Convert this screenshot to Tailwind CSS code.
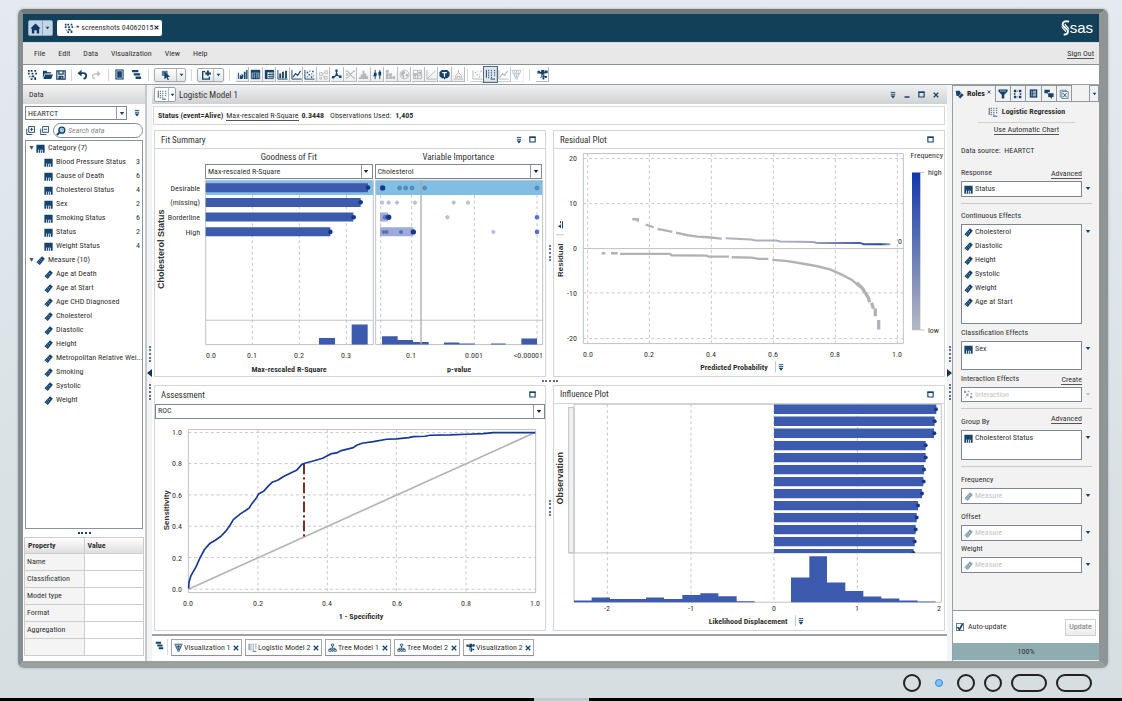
<!DOCTYPE html>
<html lang="en">
<head>
<meta charset="utf-8">
<title>SAS Visual Analytics - Logistic Model 1</title>
<script src="https://cdn.jsdelivr.net/npm/@tailwindcss/browser@4"></script>
</head>
<body class="flex h-screen flex-col overflow-hidden bg-linear-to-b from-[#e4eaf0] to-[#d6dee1] font-['Roboto_Condensed','Open_Sans_Condensed','Liberation_Sans',sans-serif] text-[8px] leading-[12px] text-[#333]">

<svg class="hidden" aria-hidden="true">
  <symbol id="cat" viewBox="0 0 12 12"><path fill="#15436b" d="M.5 1h11v10.500H9V7.500H8V11.500H6.500V7.500H5.500V11.500H4V7.500H3V11.500H.5z"/><path stroke="#9ab6cf" stroke-width=".7" d="M3.500 6.500V10M7.200 6.500V10"/></symbol>
  <symbol id="mea" viewBox="0 0 12 12"><path fill="#15436b" d="M8 .2 11.800 3.500 5 12 .5 8.300z"/><path stroke="#d5e3ef" stroke-width="1" d="m6.500 4 1.300 1.200M4.800 6l1.300 1.200M3.100 8l1.300 1.200"/></symbol>
  <symbol id="caret" viewBox="0 0 8 6"><path fill="currentColor" d="M1 1h6L4 5z"/></symbol>
  <symbol id="drop" viewBox="0 0 8 10"><path stroke="currentColor" stroke-width="1.200" d="M1 1.500h6M1 4h6"/><path fill="currentColor" d="M.8 5.600h6.400L4 9.500z"/></symbol>
  <symbol id="x" viewBox="0 0 8 8"><path stroke="currentColor" stroke-width="1.700" d="m1 1 6 6M7 1 1 7"/></symbol>
  <symbol id="max" viewBox="0 0 8 8"><path fill="none" stroke="#15436b" stroke-width="1.300" d="M1 1.200h6v5.600H1z"/><path stroke="#15436b" stroke-width="1.600" d="M.5 1.500h7"/></symbol>
  <symbol id="explore" viewBox="0 0 12 12"><path fill="#15436b" d="M1 1h2v2H1zM4 1h2v2H4zM8 1h2v2H8zM1 4h2v2H1zM5 4h2v2H5zM9 4h2v2H9zM2 8h2v1H2zM5 7h3v2H5zM4 10h2v2H4zM8 9h2v3H8z"/></symbol>
  <symbol id="stack" viewBox="0 0 12 12"><path fill="#15436b" d="M1 1h7v2.600H1zM3 4.600h7v2.600H3zM5 8.200h6V11H5z"/></symbol>
  <symbol id="logit" viewBox="0 0 12 12"><path stroke="#15436b" stroke-width="1" stroke-dasharray="1.500 1" d="M4 1v10M7 1v10M10.500 1v7"/><path fill="none" stroke="#15436b" d="M1.500 1v8.500M6 11h5"/></symbol>
  <symbol id="tree" viewBox="0 0 12 12"><path fill="none" stroke="#15436b" stroke-width="1" d="M4.500 1.500h3v2.500h-3zM6 4v3M2.500 9V7h7v2M1 8.500h3V11H1zM8 8.500h3V11H8zM5 11h2V8.500H5z"/></symbol>
  <symbol id="funnelchart" viewBox="0 0 12 12"><path fill="none" stroke="#15436b" stroke-width="1" d="M1 1.500h10L9.500 5h-7zM2.500 5 4.500 8.500h3L9.500 5M5 8.500V11h2V8.500M4 1.500v7M8 1.500v7M6 2v7"/></symbol>
  <symbol id="net" viewBox="0 0 12 12"><path stroke="#15436b" stroke-width="1" d="M2 3.500 6 5.500 10 3M6 5.500 4 10M6 5.500 9 9"/><path fill="#15436b" d="M.5 2h3v3h-3zM4.500 1H8v5H4.500zM8.600 1.600h3v3h-3zM6 7h2v4.500H6zM8.500 7.500H11v2H8.500z"/></symbol>
  <symbol id="bar" viewBox="0 0 12 12"><path fill="none" stroke="currentColor" d="M1 1v10h10.500"/><path fill="currentColor" d="M2.500 5h2v5h-2zM5.500 3h2v7h-2zM8.800 2h2v8h-2z"/></symbol>
  <symbol id="autochart" viewBox="0 0 12 12"><path fill="currentColor" d="M1 4h1v7H1zM3 6l2 2V5l2 2-1 4H3zM7.500 3h1.800v8H7.500zM10 1h1.500v10H10z"/></symbol>
  <symbol id="table" viewBox="0 0 12 12"><path fill="currentColor" d="M1 1h10v3H1z"/><path fill="none" stroke="currentColor" d="M1.500 1.500h9v9h-9zM4 4v7M6 4v7M8 4v7"/><path stroke="currentColor" stroke-width=".6" d="M5 4v7M7 4v7M9.300 4v7M2.800 4v7"/></symbol>
  <symbol id="cross" viewBox="0 0 12 12"><path fill="currentColor" d="M1 1h10v2.500H1zM1 1h2.800v10H1z"/><path fill="none" stroke="currentColor" stroke-width=".8" d="M1.500 1.500h9v9h-9zM4 6h7M4 8.300h7M6.500 3v8M8.800 3v8"/></symbol>
  <symbol id="line" viewBox="0 0 12 12"><path fill="none" stroke="currentColor" d="M1 1v10h10.500"/><path fill="none" stroke="currentColor" stroke-width="1.200" d="m2 9 3-4 2.200 2L10.500 2"/></symbol>
  <symbol id="scatter" viewBox="0 0 12 12"><path fill="none" stroke="currentColor" d="M1 1v10h10.500"/><path fill="currentColor" d="M3 3h1.500v1.500H3zM6 2h1v1H6zM9 2h1.500v1.500H9zM5 5.500h1.500V7H5zM8 5h1v1H8zM3 8h1v1H3zM7.500 8H9v1.500H7.500zM10 7h1v1h-1z"/></symbol>
  <symbol id="bubble" viewBox="0 0 12 12"><path fill="none" stroke="currentColor" stroke-width=".9" d="M1.500 4h3v3h-3zM7.500 2h3v3h-3zM7 8h3v3H7zM2 9h2v2H2zM4.500 5.500l3-2M5 7l2 1.500"/></symbol>
  <symbol id="hub" viewBox="0 0 12 12"><path stroke="currentColor" stroke-width="1.300" d="M6 6.500V2M6 6.500 2 10M6 6.500l4.500 2"/><path fill="currentColor" d="M4.800.5h2.400v2.500H4.800zM1 7.500h2.700v2.700H1zM8.800 7h2.700v2.700H8.800zM5 5h2.400v2.400H5z"/></symbol>
  <symbol id="sankey" viewBox="0 0 12 12"><path fill="none" stroke="currentColor" stroke-width="1.200" d="M1 2c4 0 6 8 10 8M1 10c4 0 6-8 10-8M1 5c3 0 3 2 0 2"/></symbol>
  <symbol id="hist" viewBox="0 0 12 12"><path fill="currentColor" d="M1 11V9h2V6h2V2h2v3h2v3h2v3z"/></symbol>
  <symbol id="box" viewBox="0 0 12 12"><path stroke="currentColor" d="M3.500 1v10M8.500 1v10"/><path fill="currentColor" d="M2 4h3v4H2zM7 3h3v4H7zM1 7h1.500v1H1z"/></symbol>
  <symbol id="heat" viewBox="0 0 12 12"><path fill="currentColor" d="M1 1h3v3H1zM4.500 4.500h3v3h-3zM1 4.500h3v3H1zM1 8h3v3H1zM4.500 8h3v3h-3zM8 8h3v3H8z"/></symbol>
  <symbol id="globe" viewBox="0 0 12 12"><circle cx="6" cy="6" r="4.800" fill="none" stroke="currentColor"/><path fill="currentColor" d="M3 3l3-1 1 2-2 2 1 3-1 1-3-4zM8 5l2 1-1 3-2-2z"/></symbol>
  <symbol id="tile" viewBox="0 0 12 12"><path fill="none" stroke="currentColor" d="M1.500 1.500h9v9h-9zM6 2v9M2 5h4M6 7.500h5M3.500 5v5.500"/><path fill="currentColor" d="M2 5h3v3H2zM7 3h3v3H7z"/></symbol>
  <symbol id="slope" viewBox="0 0 12 12"><path fill="none" stroke="currentColor" d="M1 1v10h10.500M2 10l8.500-8"/></symbol>
  <symbol id="word" viewBox="0 0 12 12"><path fill="currentColor" d="M3 1h6l2.500 2.500v4L9 10H7l-1 1.500L5 10H3L.5 7.500v-4z"/><path stroke="#fff" stroke-width="1.300" d="M3.500 4h5M6 4v4.500"/></symbol>
  <symbol id="cone" viewBox="0 0 12 12"><path fill="none" stroke="currentColor" d="M1 11h10M6 1v3M6 4 3 7v3M6 4l3 3v3M4.500 10V8h3v2"/></symbol>
  <symbol id="magnet" viewBox="0 0 12 12"><path fill="currentColor" d="M.5.500h11V3L7.500 7v4.500h-3V7L.5 3z"/><path stroke="#dfe8f0" stroke-width=".8" d="M2.500 2.500h7"/></symbol>
  <symbol id="dots" viewBox="0 0 12 12"><path fill="currentColor" d="M1 1h3v3H1zM1 5h2v2H1zM1 8h3v3H1zM7 1h3v3H7zM8 5h2v2H8zM7 8h3v3H7zM5 2h1v1H5zM5 9h1v1H5z"/></symbol>
  <symbol id="form" viewBox="0 0 12 12"><path fill="#15436b" d="M1 .5h10v11H1z"/><path stroke="#fff" d="M3 3h1M5 3h4.500M3 5h1M5 5h4.500M3 7h1M5 7h4.500M3 9h1M5 9h4.500"/></symbol>
  <symbol id="chat" viewBox="0 0 12 12"><path fill="#15436b" d="M.5 1h6.500v3H4.500v2L3 5H.5zM5 5h6.500v4.500H9.500V12L7 9.500H5z"/></symbol>
  <symbol id="pages" viewBox="0 0 12 12"><path fill="none" stroke="#5a7894" d="M1.500 1.500h7v8h-7z"/><path fill="#eef3f7" stroke="#5a7894" d="M3.500 3h7.500v8.500H3.500z"/><path stroke="#15436b" d="m5 5 4 5M9 5 5 10"/></symbol>
</svg>

<!-- Monitor frame -->
<div class="mt-[9px] mr-[14px] ml-[18px] flex min-h-0 flex-1 flex-col rounded-md border-t-[5px] border-r-[9px] border-b-[7px] border-l-[5px] border-t-[#71797b] border-r-[#8f9596] border-b-[#9a9fa0] border-l-[#868d90] shadow-[0_0_2px_1px_#c3cacd]">

  <header class="flex h-[29px] shrink-0 items-center border-b border-[#d2dce2] bg-[#124059] pr-[6px] pl-[5px]">
    <div class="flex h-4 w-[25px] rounded-xs border border-[#8ca9bd] bg-[#c3d6e7]">
      <button class="flex w-[14px] items-center justify-center border-r border-[#8ca9bd]" aria-label="Home"><svg class="size-[11px]" viewBox="0 0 12 12"><path fill="#0c3961" d="M6 .5 11.500 6H10v5.500H7.300V8H4.700v3.500H2V6H.5z"/></svg></button>
      <button class="flex flex-1 items-center justify-center text-[#15436b]" aria-label="Home menu"><svg class="h-1 w-[5px]"><use href="#caret"/></svg></button>
    </div>
    <div class="ml-1 flex h-4 items-center rounded-xs bg-white pr-[3px] pl-[7px] text-[#333]">
      <svg class="size-[10px]"><use href="#explore"/></svg>
      <span class="ml-[2px] whitespace-nowrap">* screenshots 04062015</span>
      <button class="ml-px text-[#222]" aria-label="Close"><svg class="mb-[2px] size-[5px]"><use href="#x"/></svg></button>
    </div>
    <div class="ml-auto flex items-center text-white" aria-label="SAS">
      <svg class="h-4 w-[9px]" viewBox="0 0 9 16" fill="none" stroke="#fff"><path stroke-width="1.900" d="M8 1.600C4 .4 1.200 2.200 1.800 5c.7 2.800 5 3.200 5.200 6 .1 2-1.600 3.600-4.300 3.800"/><path stroke-width="1.100" d="M.8 6.500c.4 2.600 3.800 3 4 5.500M4 4c.6 2.500 3.400 3 4 5.500"/></svg>
      <span class="font-['Liberation_Sans'] text-[15px] leading-4">sas</span>
    </div>
  </header>

  <nav class="flex h-[22px] shrink-0 items-center border-b border-[#8b9296] bg-[#e8e8e8] px-[11px] whitespace-nowrap" aria-label="Main">
    <div class="flex gap-[13px]">
      <button>File</button><button>Edit</button><button>Data</button><button>Visualization</button><button>View</button><button>Help</button>
    </div>
    <a href="#" class="-mr-[6px] ml-auto border-b border-[#555] leading-[9px]">Sign Out</a>
  </nav>

  <!-- Toolbar -->
  <div class="flex h-5 shrink-0 items-center border-b border-[#9aa0a4] bg-white pl-1 text-[#15436b] [&_button]:flex [&_button]:items-center [&_button]:justify-center">
    <div class="flex w-[39px] justify-between">
      <button aria-label="New"><svg class="size-[11px]"><use href="#explore"/></svg></button>
      <button aria-label="Open"><svg class="size-[11px]" viewBox="0 0 12 12"><path fill="currentColor" d="M1 2h4l1 1.500h4V5H3L1 10zM3.300 6H12l-2 5H1.500z"/></svg></button>
      <button aria-label="Save"><svg class="size-[10px]" viewBox="0 0 12 12"><path fill="none" stroke="currentColor" stroke-width="1.500" d="M1 1h10v10H1zM3.500 1v4h5V1"/><path fill="currentColor" d="M3 7h6v4H7.500V8.500h-1V11H3z"/></svg></button>
    </div>
    <i class="ml-[5px] h-3 w-px bg-[#d5d5d5]"></i>
    <div class="ml-[5px] flex w-6 justify-between">
      <button aria-label="Undo"><svg class="size-[11px]" viewBox="0 0 12 12"><path fill="none" stroke="currentColor" stroke-width="2" d="M2 4.500h5c4 0 4 5.500 0 6"/><path fill="currentColor" d="M.5 4.500 5 .8v7.400z"/></svg></button>
      <button aria-label="Redo" disabled><svg class="size-[10px]" viewBox="0 0 12 12"><path fill="none" stroke="#b9bcbe" stroke-width="1.500" d="M10 4.500H5c-4 0-4 5.500 0 6"/><path fill="#b9bcbe" d="M11.500 4.500 7.500 1v7z"/></svg></button>
    </div>
    <i class="ml-[7px] h-3 w-px bg-[#d5d5d5]"></i>
    <div class="ml-[5px] flex w-7 justify-between">
      <button aria-label="Layout"><svg class="size-[11px]" viewBox="0 0 12 12"><path fill="currentColor" d="M1.500.5h9v11h-9z"/><path stroke="#fff" stroke-width=".7" fill="none" d="M3 2h6v8H3z"/></svg></button>
      <button aria-label="Arrange"><svg class="size-[11px]"><use href="#stack"/></svg></button>
    </div>
    <i class="ml-[6px] h-3 w-px bg-[#d5d5d5]"></i>
    <div class="ml-[5px] flex h-[14px] w-8 rounded-xs border border-[#a7adb2] bg-linear-to-b from-white to-[#e2e4e6] shadow-sm">
      <button class="w-[22px] border-r border-[#bbb]" aria-label="Select"><svg class="size-[10px]" viewBox="0 0 12 12"><path fill="#5d7a96" d="M1 1h7v6H1z"/><path fill="currentColor" d="m4 2 7 6-3 .5L9.500 12H8L6.500 9 4 11z"/></svg></button>
      <button class="flex-1" aria-label="Select menu"><svg class="h-1 w-[5px]"><use href="#caret"/></svg></button>
    </div>
    <i class="ml-[5px] h-3 w-px bg-[#d5d5d5]"></i>
    <div class="ml-[5px] flex h-[14px] w-[27px] rounded-xs border border-[#a7adb2] bg-linear-to-b from-white to-[#e2e4e6] shadow-sm">
      <button class="w-4 border-r border-[#bbb]" aria-label="New visualization"><svg class="size-[10px]" viewBox="0 0 12 12"><path fill="none" stroke="currentColor" stroke-width="1.600" d="M5 2H2v9h8V8"/><path fill="currentColor" d="M7 .5h2.500V3H12v2.500H9.500V7H7V5.500H5V3h2z"/></svg></button>
      <button class="flex-1" aria-label="New visualization menu"><svg class="h-1 w-[5px]"><use href="#caret"/></svg></button>
    </div>
    <i class="ml-[5px] h-3 w-px bg-[#d5d5d5]"></i>
    <div class="ml-[6px] flex w-[229px] justify-between [&_svg]:size-[11px] [&_svg]:shrink-0 [&>button]:h-[15px] [&>button]:w-[13px] [&>button]:border-r [&>button]:border-b [&>button]:border-[#b9bdc0] [&>button]:bg-linear-to-b [&>button]:from-white [&>button]:to-[#eceeef] [&>button:disabled]:text-[#b5b8ba]">
      <button aria-label="Automatic chart"><svg><use href="#autochart"/></svg></button>
      <button aria-label="Table"><svg><use href="#table"/></svg></button>
      <button aria-label="Crosstab"><svg><use href="#cross"/></svg></button>
      <button aria-label="Bar chart"><svg><use href="#bar"/></svg></button>
      <button aria-label="Line chart"><svg><use href="#line"/></svg></button>
      <button aria-label="Scatter plot"><svg><use href="#scatter"/></svg></button>
      <button aria-label="Bubble plot" disabled><svg><use href="#bubble"/></svg></button>
      <button aria-label="Network"><svg><use href="#hub"/></svg></button>
      <button aria-label="Sankey" disabled><svg><use href="#sankey"/></svg></button>
      <button aria-label="Histogram" disabled><svg><use href="#hist"/></svg></button>
      <button aria-label="Box plot"><svg><use href="#box"/></svg></button>
      <button aria-label="Heat map" disabled><svg><use href="#heat"/></svg></button>
      <button aria-label="Geo map" disabled><svg><use href="#globe"/></svg></button>
      <button aria-label="Treemap" disabled><svg><use href="#tile"/></svg></button>
      <button aria-label="Correlation" disabled><svg><use href="#slope"/></svg></button>
      <button aria-label="Word cloud"><svg><use href="#word"/></svg></button>
      <button aria-label="Decision tree" disabled><svg><use href="#cone"/></svg></button>
    </div>
    <i class="ml-[2px] h-3 w-px bg-[#d5d5d5]"></i>
    <div class="ml-[3px] flex w-[53px] justify-between [&_svg]:size-[11px] [&_svg]:shrink-0 [&>button]:h-[15px] [&>button]:w-[13px] [&>button]:border-r [&>button]:border-b [&>button]:border-[#c9cccf] [&>button:disabled]:text-[#b5b8ba]">
      <button aria-label="Linear regression" disabled><svg><use href="#scatter"/></svg></button>
      <button class="bg-[#dfe7ee] outline outline-[#4d6a85]" aria-label="Logistic regression" aria-pressed="true"><svg><use href="#logit"/></svg></button>
      <button aria-label="GLM" disabled><svg><use href="#line"/></svg></button>
      <button class="opacity-30" aria-label="Cluster" disabled><svg><use href="#funnelchart"/></svg></button>
    </div>
    <i class="ml-[5px] h-3 w-px bg-[#d5d5d5]"></i>
    <button class="ml-[6px] h-[15px] w-[13px] border-r border-b border-[#b9bdc0]" aria-label="Custom"><svg class="size-[11px] shrink-0"><use href="#net"/></svg></button>
  </div>

  <div class="flex min-h-0 flex-1 bg-[#f3f4f5]">

    <!-- Data pane -->
    <aside class="flex w-[122px] shrink-0 flex-col bg-white">
      <h2 class="flex h-[19px] shrink-0 items-center bg-linear-to-b from-[#f3f3f3] to-[#d4d6d7] pl-[6px]">Data</h2>
      <div class="mt-[2px] flex items-center pl-[2px]">
        <div class="relative w-[102px]">
          <select class="block h-[14px] w-full appearance-none border border-[#7c8790] bg-white pl-[2px] leading-[11px]" aria-label="Data source"><option>HEARTCT</option></select>
          <span class="pointer-events-none absolute inset-y-px right-px flex w-[10px] items-center justify-center border-l border-[#999] text-[#15436b]"><svg class="h-[5px] w-[6px]"><use href="#caret"/></svg></span>
        </div>
        <button class="ml-[7px] text-[#15436b]" aria-label="Data options"><svg class="h-2 w-[6px]"><use href="#drop"/></svg></button>
      </div>
      <div class="mt-[3px] flex items-center pl-[3px]">
        <button aria-label="Expand all"><svg class="size-[9px]" viewBox="0 0 10 10" fill="none" stroke="#15436b"><path d="M3 .5h6.500V7H3zM.8 3v6.500H7M4.500 3.700H8M6.200 2v3.500"/></svg></button>
        <button class="ml-[5px]" aria-label="Collapse all"><svg class="size-[9px]" viewBox="0 0 10 10" fill="none" stroke="#15436b"><path d="M3 .5h6.500V7H3zM.8 3v6.500H7M4.500 3.700H8"/></svg></button>
        <label class="ml-1 flex h-[15px] w-[90px] items-center rounded-full border border-[#7f8d99] bg-white pl-[2px]">
          <svg class="size-[10px] shrink-0" viewBox="0 0 12 12"><circle cx="7" cy="5" r="3.600" fill="#9cc0de" stroke="#15436b" stroke-width="1.500"/><path stroke="#15436b" stroke-width="2.200" d="M4.500 7.500 1 11"/></svg>
          <input class="ml-[2px] w-full min-w-0 bg-transparent italic outline-none placeholder:text-[#888]" placeholder="Search data" aria-label="Search data">
        </label>
      </div>
      <div class="mr-[2px] ml-[2px] mt-[2px] min-h-0 flex-1 border border-[#8a949c] pr-[2px] pl-[2px] leading-[14px] whitespace-nowrap">
        <ul class="[&_li]:flex [&_li]:h-[14px] [&_li]:items-center [&_li>svg]:mr-[3px] [&_li>svg]:size-[9px] [&_li>svg]:shrink-0 [&_b]:ml-auto [&_b]:font-normal">
          <li><span class="mr-[2px] w-[6px] text-[7px] text-[#555]">▼</span><svg><use href="#cat"/></svg>Category (7)</li>
          <li class="pl-4"><svg><use href="#cat"/></svg>Blood Pressure Status<b>3</b></li>
          <li class="pl-4"><svg><use href="#cat"/></svg>Cause of Death<b>6</b></li>
          <li class="pl-4"><svg><use href="#cat"/></svg>Cholesterol Status<b>4</b></li>
          <li class="pl-4"><svg><use href="#cat"/></svg>Sex<b>2</b></li>
          <li class="pl-4"><svg><use href="#cat"/></svg>Smoking Status<b>6</b></li>
          <li class="pl-4"><svg><use href="#cat"/></svg>Status<b>2</b></li>
          <li class="pl-4"><svg><use href="#cat"/></svg>Weight Status<b>4</b></li>
          <li><span class="mr-[2px] w-[6px] text-[7px] text-[#555]">▼</span><svg><use href="#mea"/></svg>Measure (10)</li>
          <li class="pl-4"><svg><use href="#mea"/></svg>Age at Death</li>
          <li class="pl-4"><svg><use href="#mea"/></svg>Age at Start</li>
          <li class="pl-4"><svg><use href="#mea"/></svg>Age CHD Diagnosed</li>
          <li class="pl-4"><svg><use href="#mea"/></svg>Cholesterol</li>
          <li class="pl-4"><svg><use href="#mea"/></svg>Diastolic</li>
          <li class="pl-4"><svg><use href="#mea"/></svg>Height</li>
          <li class="pl-4"><svg><use href="#mea"/></svg>Metropolitan Relative Wei...</li>
          <li class="pl-4"><svg><use href="#mea"/></svg>Smoking</li>
          <li class="pl-4"><svg><use href="#mea"/></svg>Systolic</li>
          <li class="pl-4"><svg><use href="#mea"/></svg>Weight</li>
        </ul>
      </div>
      <div class="flex h-2 shrink-0 items-center justify-center"><i class="h-0 w-[13px] border-t-2 border-dotted border-[#15436b]"></i></div>
      <div class="mr-px mb-[5px] ml-px">
      <table class="w-full table-fixed border-collapse border border-[#bbb] text-left [&_td]:h-[17px] [&_td]:border [&_td]:border-[#ccc] [&_td]:pl-[2px] [&_td:first-child]:bg-[#f4f4f4]">
        <thead><tr class="h-4 bg-linear-to-b from-white to-[#dcdcdc]"><th class="border border-[#ccc] pl-[3px]">Property</th><th class="border border-[#ccc] pl-[3px]">Value</th></tr></thead>
        <tbody><tr><td>Name</td><td></td></tr><tr><td>Classification</td><td></td></tr><tr><td>Model type</td><td></td></tr><tr><td>Format</td><td></td></tr><tr><td>Aggregation</td><td></td></tr><tr><td></td><td></td></tr></tbody>
      </table>
      </div>
    </aside>
    <div class="flex w-[7px] shrink-0 flex-col items-center justify-center gap-[7px] border-l-2 border-[#c5c9cb] bg-[#f3f4f5]">
      <i class="h-4 border-l-2 border-dotted border-[#5f7489]"></i>
      <svg class="h-2 w-[5px]" viewBox="0 0 5 8"><path fill="#0f3556" d="M5 0v8L0 4z"/></svg>
      <i class="h-4 border-l-2 border-dotted border-[#5f7489]"></i>
    </div>

    <!-- Workspace -->
    <main class="flex min-w-0 flex-1 flex-col bg-white">
      <div class="flex h-[19px] shrink-0 items-center bg-linear-to-b from-[#f0f1f2] to-[#cfd2d4] pr-2 pl-[2px] text-[#15436b]">
        <div class="flex h-[15px] w-[22px] rounded-xs border border-[#99a1a8] bg-white">
          <button class="flex w-[14px] items-center justify-center border-r border-[#bbb]" aria-label="Chart type"><svg class="size-[10px]"><use href="#logit"/></svg></button>
          <button class="flex flex-1 items-center justify-center" aria-label="Chart type menu"><svg class="h-1 w-[5px]"><use href="#caret"/></svg></button>
        </div>
        <h1 class="ml-[3px] text-[9px] text-[#333]">Logistic Model 1</h1>
        <div class="ml-auto flex items-center gap-2">
          <button aria-label="Options"><svg class="h-2 w-[6px]"><use href="#drop"/></svg></button>
          <button aria-label="Minimize"><svg class="size-[6px]" viewBox="0 0 6 6"><path stroke="currentColor" stroke-width="1.500" d="M.5 5h5"/></svg></button>
          <button aria-label="Maximize"><svg class="size-[7px]"><use href="#max"/></svg></button>
          <button aria-label="Close"><svg class="size-[6px]"><use href="#x"/></svg></button>
        </div>
      </div>
      <div class="mt-[2px] mr-[2px] ml-px flex h-[19px] shrink-0 items-center border border-[#d4d8db] pl-1 whitespace-nowrap">
        <b>Status (event=Alive)</b><a href="#" class="ml-[3px] border-b border-[#555] leading-[9px]">Max-rescaled R-Square</a><b class="ml-[3px]">0.3448</b><span class="ml-[6px]">Observations Used:</span><b class="ml-1">1,405</b>
      </div>

      <div class="mt-[5px] mr-[2px] mb-[3px] ml-[2px] grid min-h-0 flex-1 grid-cols-[1fr_7px_1fr] grid-rows-[1fr_8px_1fr]">
        <!-- Fit summary -->
        <section class="flex min-h-0 min-w-0 flex-col border border-[#d0d5d9]">
          <div class="flex h-[18px] shrink-0 items-center border-b border-[#d0d5d9] pr-[9px] pl-[6px] text-[#15436b]"><h2 class="text-[9px] text-[#333]">Fit Summary</h2>
            <button class="ml-auto" aria-label="Options"><svg class="h-2 w-[6px]"><use href="#drop"/></svg></button><button class="ml-[7px]" aria-label="Maximize"><svg class="size-[7px]"><use href="#max"/></svg></button></div>
          <div class="grid shrink-0 grid-cols-2 gap-x-[2px] pt-px pr-[3px] pl-[50px] text-center">
            <h3 class="h-[14px] text-[9px] leading-[14px]">Goodness of Fit</h3><h3 class="h-[14px] text-[9px] leading-[14px]">Variable Importance</h3>
            <div class="relative"><select class="block h-[15px] w-full appearance-none border border-[#7c8790] bg-white pl-[2px] leading-3" aria-label="Goodness of Fit"><option>Max-rescaled R-Square</option></select><span class="pointer-events-none absolute inset-y-px right-[2px] flex w-[10px] items-center justify-center border-l border-[#999] text-[#222]"><svg class="h-[5px] w-[6px]"><use href="#caret"/></svg></span></div>
            <div class="relative"><select class="block h-[15px] w-full appearance-none border border-[#7c8790] bg-white pl-[2px] leading-3" aria-label="Variable Importance"><option>Cholesterol</option></select><span class="pointer-events-none absolute inset-y-px right-[2px] flex w-[10px] items-center justify-center border-l border-[#999] text-[#222]"><svg class="h-[5px] w-[6px]"><use href="#caret"/></svg></span></div>
          </div>
          <svg class="min-h-0 w-full flex-1 fill-[#333] text-[8px]" viewBox="155 178 390 196">
            <g transform="translate(140 120) scale(.33333)">
              <path fill="#80bee3" d="M197 177h503v44H197zM707 177h501v44H707z"/>
              <path fill="none" stroke="#c6c6c6" stroke-width="3" stroke-dasharray="9 8" d="M337 221V670M478 221V670M619 221V670M722 221V670M815 221V670M1003 221V670M1191 221V670"/>
              <path fill="none" stroke="#bfc3c6" stroke-width="3" d="M197 177h503v493H197zM707 177h501v493H707zM197 597h503M707 597h501"/>
              <path fill="#3c5aae" d="M197 186h487v27H197zM197 230h465v27H197zM197 274h443v27H197zM197 318h374v27H197zM537 650h48v20h-48zM635 610h48v60h-48zM726 645h47v11h46v6h47v8H726zM912 664h46v3h46v3h-92zM1053 667h44v3h-44zM1144 652h47v18h-47z"/>
              <path fill="#9ea9dc" d="M720 186h10v27h-10zM720 274h24v27h-24zM720 318h100v27H720z"/>
              <path stroke="#a8adb3" stroke-width="4" d="M843 177V670"/>
              <g fill="#4c7fae" stroke="#41699b" stroke-width="2" opacity=".75"><circle cx="779" cy="200" r="6"/><circle cx="797" cy="200" r="6"/><circle cx="816" cy="200" r="6"/><circle cx="854" cy="200" r="6"/><circle cx="1191" cy="200" r="6"/></g>
              <g fill="#bcc5df" stroke="#a3aece" stroke-width="2"><circle cx="726" cy="244" r="5"/><circle cx="746" cy="244" r="5"/><circle cx="771" cy="244" r="5"/><circle cx="825" cy="244" r="5"/><circle cx="941" cy="244" r="5"/><circle cx="984" cy="244" r="5"/><circle cx="922" cy="288" r="5"/><circle cx="1060" cy="332" r="5"/></g>
              <g fill="#5a72b8"><circle cx="1191" cy="288" r="7"/><circle cx="1191" cy="332" r="7"/><circle cx="735" cy="288" r="7"/><circle cx="731" cy="332" r="6"/><circle cx="740" cy="332" r="6"/><circle cx="783" cy="332" r="6"/></g>
              <g fill="#14398a"><circle cx="684" cy="199" r="7"/><circle cx="662" cy="243" r="7"/><circle cx="641" cy="288" r="7"/><circle cx="571" cy="332" r="7"/><circle cx="728" cy="200" r="8"/><circle cx="746" cy="288" r="8"/><circle cx="820" cy="332" r="8"/></g>
            </g>
            <g text-anchor="end"><text x="200" y="190">Desirable</text><text x="200" y="204">(missing)</text><text x="200" y="219">Borderline</text><text x="200" y="234">High</text><text x="543" y="357">&lt;0.00001</text></g>
            <g text-anchor="middle"><text x="211" y="357">0.0</text><text x="252" y="357">0.1</text><text x="299" y="357">0.2</text><text x="346" y="357">0.3</text><text x="411" y="357">0.1</text><text x="474" y="357">0.001</text>
            <g font-weight="bold"><text x="289" y="371">Max-rescaled R-Square</text><text x="459" y="371">p-value</text><text class="font-['Liberation_Sans'] text-[9px]" transform="translate(164 248) rotate(-90)">Cholesterol Status</text></g></g>
          </svg>
        </section>
        <div class="flex items-center justify-center"><i class="h-4 border-l-2 border-dotted border-[#5f7489]"></i></div>
        <!-- Residual plot -->
        <section class="flex min-h-0 min-w-0 flex-col border border-[#d0d5d9]">
          <div class="flex h-[18px] shrink-0 items-center border-b border-[#d0d5d9] pr-[10px] pl-[6px]"><h2 class="text-[9px]">Residual Plot</h2><button class="ml-auto" aria-label="Maximize"><svg class="size-[7px]"><use href="#max"/></svg></button></div>
          <svg class="min-h-0 w-full flex-1 fill-[#333] text-[8px]" viewBox="554 149 390 226">
            <defs><linearGradient id="freq" x2="0" y2="1"><stop stop-color="#1138ac"/><stop offset="1" stop-color="#b7b9c1"/></linearGradient><linearGradient id="res" x1="0" x2="1"><stop stop-color="#b4b4b8"/><stop offset=".5" stop-color="#a5a9bd"/><stop offset=".8" stop-color="#4c62a8"/><stop offset=".94" stop-color="#2444a2"/><stop offset="1" stop-color="#9ca6c0"/></linearGradient></defs>
            <g transform="translate(545 120) scale(.33333)" fill="none">
              <path stroke="#c9c9c9" stroke-width="3" stroke-dasharray="9 8" d="M128 100V670M313 100V670M499 100V670M685 100V670M871 100V670M1057 100V670M115 115H1075M115 250H1075M115 518H1075M115 655H1075"/>
              <path stroke="#bfc3c6" stroke-width="3" d="M115 100H1075V670H115zM115 385H1075"/>
              <path stroke="#b2b2b6" stroke-width="7" d="M262 297h16v4h4M302 313l24 8M338 327l12 1 32 7M393 337l35 8 30 4 30 2 42 4"/>
              <path stroke="url(#res)" stroke-width="6" d="M542 354l75 4 15 3h62l12 3 98 1 12 3h130l10 4h80"/>
              <path stroke="#b2b2b6" stroke-width="7" d="M170 399h11M198 399h20M225 401l150 0 5 4 105 1 5 3h62M560 411l60 1 20 4h30M682 419l40 3 45 7 50 9 40 10 35 16 30 16 22 20"/>
              <path stroke="#b2b2b6" stroke-width="10" d="M935 487l16 16 10 15 9 14 4 14M980 547l5 18M991 565v23M1001 599v29"/>
              <path fill="url(#freq)" d="M1101 157h25v473h-25z"/><path stroke="#b7bcc3" stroke-width="3" d="M1126 157h12M1126 629h12"/>
            </g>
            <g text-anchor="end"><text x="577" y="161">20</text><text x="577" y="206">10</text><text x="577" y="251">0</text><text x="577" y="296">-10</text><text x="577" y="341">-20</text><text x="943" y="158">Frequency</text></g>
            <g text-anchor="middle"><text x="588" y="357">0.0</text><text x="649" y="357">0.2</text><text x="711" y="357">0.4</text><text x="773" y="357">0.6</text><text x="835" y="357">0.8</text><text x="897" y="357">1.0</text><text x="900" y="244">0</text>
            <g font-weight="bold"><text x="734" y="370">Predicted Probability</text><text class="font-['Liberation_Sans']" transform="translate(563 260) rotate(-90)">Residual</text></g></g>
            <text x="928" y="175">high</text><text x="928" y="333">low</text>
            <path stroke="#c5c9cc" d="M775.500 361v11M556 234.500h8"/>
            <use href="#drop" x="778" y="363" width="6" height="8" color="#15436b"/>
            <path fill="#15436b" d="M558 226l3-2v4zM562 221h1v7h-1zM560 221h1v2h-1z"/>
          </svg>
        </section>
        <div class="col-span-3 flex items-center justify-center"><i class="w-4 border-t-2 border-dotted border-[#5f7489]"></i></div>
        <!-- Assessment -->
        <section class="flex min-h-0 min-w-0 flex-col border border-[#d0d5d9]">
          <div class="flex h-[18px] shrink-0 items-center pr-[9px] pl-[6px]"><h2 class="text-[9px]">Assessment</h2><button class="ml-auto" aria-label="Maximize"><svg class="size-[7px]"><use href="#max"/></svg></button></div>
          <div class="relative shrink-0"><select class="block h-[15px] w-full appearance-none border border-[#7c8790] bg-white pl-[2px] leading-3" aria-label="Assessment chart"><option>ROC</option></select><span class="pointer-events-none absolute inset-y-px right-[2px] flex w-[10px] items-center justify-center border-l border-[#999] text-[#222]"><svg class="h-[5px] w-[6px]"><use href="#caret"/></svg></span></div>
          <svg class="min-h-0 w-full flex-1 fill-[#333] text-[8px]" viewBox="155 419 390 211">
            <g transform="translate(140 375) scale(.33333)" fill="none">
              <path stroke="#c9c9c9" stroke-width="3" stroke-dasharray="9 8" d="M354 163V652M562 163V652M769 163V652M978 163V652M145 172H1187M145 265H1187M145 359H1187M145 453H1187M145 547H1187M145 642H1187"/>
              <path stroke="#bfc3c6" stroke-width="3" d="M145 163H1187V652H145z"/>
              <path stroke="#b3b3b3" stroke-width="5" d="M147 641 1185 172"/>
              <path stroke="#7d2f24" stroke-width="6" stroke-dasharray="32 9 7 9" d="M492 265V488"/>
              <path stroke="#17389a" stroke-width="5" stroke-linejoin="round" d="M146 640 147 620 153 601 168 575 180 548 194 522 209 505 226 495 243 483 258 467 270 450 280 433 302 415 318 405 328 398 335 386 348 370 356 356 372 347 386 331 398 320 413 315 432 303 471 284 485 268 494 264 517 258 548 249 575 235 590 233 604 226 640 217 650 210 666 204 700 199 740 192 770 191 806 187 820 184 855 183 870 180 930 179 980 177 1030 175 1060 172 1186 172"/>
            </g>
            <g text-anchor="end"><text x="182" y="435">1.0</text><text x="182" y="466">0.8</text><text x="182" y="498">0.6</text><text x="182" y="529">0.4</text><text x="182" y="561">0.2</text><text x="182" y="592">0.0</text></g>
            <g text-anchor="middle"><text x="188" y="606">0.0</text><text x="258" y="606">0.2</text><text x="327" y="606">0.4</text><text x="397" y="606">0.6</text><text x="466" y="606">0.8</text><text x="535" y="606">1.0</text>
            <g font-weight="bold"><text x="361" y="619">1 - Specificity</text><text class="font-['Liberation_Sans']" transform="translate(169 510) rotate(-90)">Sensitivity</text></g></g>
          </svg>
        </section>
        <div class="flex items-center justify-center"><i class="h-4 border-l-2 border-dotted border-[#5f7489]"></i></div>
        <!-- Influence plot -->
        <section class="flex min-h-0 min-w-0 flex-col border border-[#d0d5d9]">
          <div class="flex h-[18px] shrink-0 items-center border-b border-[#d0d5d9] pr-[10px] pl-[6px]"><h2 class="text-[9px]">Influence Plot</h2><button class="ml-auto" aria-label="Maximize"><svg class="size-[7px]"><use href="#max"/></svg></button></div>
          <svg class="min-h-0 w-full flex-1 fill-[#333] text-[8px]" viewBox="554 404 390 226">
            <g transform="translate(545 380) scale(.33333)">
              <path fill="#f1f1f1" stroke="#bfc3c6" stroke-width="3" d="M71 82h16v436H71z"/>
              <path fill="none" stroke="#c6c6c6" stroke-width="3" stroke-dasharray="9 8" d="M187 72V666M438 72V666M687 72V666M937 72V666"/>
              <path fill="none" stroke="#bfc3c6" stroke-width="3" d="M87 72h1102v594H87zM71 518h1118"/>
              <path fill="#3c5aae" d="M687 73h487v28H687zM687 109h482v28H687zM687 145h480v28H687zM687 182h455v28H687zM687 218h455v28H687zM687 254h450v28H687zM687 290h448v28H687zM687 326h444v28H687zM687 362h432v28H687zM687 398h428v28H687zM687 434h425v28H687zM687 470h422v28H687zM687 506h419v12H687z"/>
              <path fill="#3c5aae" d="M87 666v-5h53v-9h55v4h108v-4h54v4h55v-12h54v-5h54v9h55v18zM575 663h54v3h-54zM738 666v-74h55v-64h53v79h55v25h54v17h54v6h54v6h55v3h54v2z"/>
              <g fill="#14398a"><circle cx="1173" cy="87" r="6"/><circle cx="1169" cy="123" r="6"/><circle cx="1168" cy="159" r="6"/><circle cx="1142" cy="195" r="6"/><circle cx="1142" cy="232" r="6"/><circle cx="1137" cy="268" r="6"/><circle cx="1136" cy="304" r="6"/><circle cx="1131" cy="340" r="6"/><circle cx="1119" cy="376" r="6"/><circle cx="1115" cy="412" r="6"/><circle cx="1112" cy="448" r="6"/><circle cx="1109" cy="484" r="6"/><path d="M1099 518a6 6 0 0 1 12 0z"/></g>
            </g>
            <g text-anchor="middle"><text x="607" y="611">-2</text><text x="691" y="611">-1</text><text x="774" y="611">0</text><text x="857" y="611">1</text><text x="939" y="611">2</text>
            <g font-weight="bold"><text x="748" y="624">Likelihood Displacement</text><text class="font-['Liberation_Sans'] text-[9px]" transform="translate(563 478) rotate(-90)">Observation</text></g></g>
            <path stroke="#c5c9cc" d="M795.500 615v11"/>
            <use href="#drop" x="798" y="617" width="6" height="8" color="#15436b"/>
          </svg>
        </section>
      </div>

      <div class="flex h-[27px] shrink-0 items-start border-t-2 border-[#9ca1a5] pt-[3px] pl-[3px] whitespace-nowrap text-[#15436b]">
        <button class="mt-[2px]" aria-label="All visualizations"><svg class="size-[9px]"><use href="#stack"/></svg></button>
        <i class="mr-[3px] ml-[3px] h-4 w-px bg-[#ddd]"></i>
        <div class="flex gap-[3px] [&>div]:flex [&>div]:h-[17px] [&>div]:items-center [&>div]:border [&>div]:border-[#a3a8ad] [&>div]:border-b-[#8b9095] [&>div]:pr-[2px] [&>div]:pl-[2px] [&>div]:shadow-xs [&_svg]:shrink-0">
          <div class="w-[71px]"><svg class="size-[9px]"><use href="#funnelchart"/></svg><button class="ml-px text-[#333]">Visualization 1</button><button class="ml-auto" aria-label="Close Visualization 1"><svg class="size-[6px]"><use href="#x"/></svg></button></div>
          <div class="w-[77px]"><svg class="size-[9px]"><use href="#logit"/></svg><button class="ml-px text-[#333]">Logistic Model 2</button><button class="ml-auto" aria-label="Close Logistic Model 2"><svg class="size-[6px]"><use href="#x"/></svg></button></div>
          <div class="w-[66px]"><svg class="size-[9px]"><use href="#tree"/></svg><button class="ml-px text-[#333]">Tree Model 1</button><button class="ml-auto" aria-label="Close Tree Model 1"><svg class="size-[6px]"><use href="#x"/></svg></button></div>
          <div class="w-[66px]"><svg class="size-[9px]"><use href="#tree"/></svg><button class="ml-px text-[#333]">Tree Model 2</button><button class="ml-auto" aria-label="Close Tree Model 2"><svg class="size-[6px]"><use href="#x"/></svg></button></div>
          <div class="w-[71px]"><svg class="size-[9px]"><use href="#net"/></svg><button class="ml-px text-[#333]">Visualization 2</button><button class="ml-auto" aria-label="Close Visualization 2"><svg class="size-[6px]"><use href="#x"/></svg></button></div>
        </div>
      </div>
    </main>

    <div class="flex w-[6px] shrink-0 flex-col items-center justify-center gap-[7px] border-r border-[#9aa0a4] bg-[#f3f4f5]">
      <i class="h-4 border-l-2 border-dotted border-[#5f7489]"></i>
      <svg class="h-2 w-[5px]" viewBox="0 0 5 8"><path fill="#0f3556" d="M0 0v8l5-4z"/></svg>
      <i class="h-4 border-l-2 border-dotted border-[#5f7489]"></i>
    </div>

    <!-- Roles pane -->
    <aside class="flex w-[146px] shrink-0 flex-col bg-[#f2f2f2]">
      <div class="flex h-[17px] shrink-0 items-stretch text-[#15436b] [&_svg]:shrink-0 [&>button]:flex [&>button]:items-center [&>button]:justify-center [&>button]:border-[#8f989f]">
        <div class="flex w-[43px] items-center border-t border-r border-[#8f989f] pl-[2px]"><svg class="size-[9px]" viewBox="0 0 12 12"><path fill="currentColor" d="M1 1h5l2 3-2 4H2z"/><path fill="#15436b" stroke="#f2f2f2" stroke-width=".7" d="M9 4l3 2.500-5 5-3-2.500z"/></svg><b class="ml-[3px] text-[#222]">Roles</b><button class="ml-[2px] pb-1" aria-label="Close Roles"><svg class="size-1"><use href="#x"/></svg></button></div>
        <button class="w-[15px] border border-l-0" aria-label="Filters"><svg class="size-[10px]"><use href="#magnet"/></svg></button>
        <button class="w-[15px] border border-l-0" aria-label="Ranks"><svg class="size-[10px]"><use href="#dots"/></svg></button>
        <button class="w-4 border border-l-0" aria-label="Properties"><svg class="size-[9px]"><use href="#form"/></svg></button>
        <button class="w-[15px] border border-l-0" aria-label="Comments"><svg class="size-[10px]"><use href="#chat"/></svg></button>
        <button class="w-[15px] border border-l-0" aria-label="Display rules"><svg class="size-[10px]"><use href="#pages"/></svg></button>
        <span class="flex-1 border-b border-[#8f989f]"></span>
        <button class="w-[10px] border" aria-label="More tabs"><svg class="h-1 w-[5px]"><use href="#caret"/></svg></button>
      </div>
      <div class="min-h-0 flex-1 overflow-hidden border-b border-[#8f989f] pr-[7px] pl-2 whitespace-nowrap">
        <div class="mx-[17px] flex h-[21px] items-center justify-center gap-1 border-b border-[#d0d0d0]"><svg class="size-[10px] shrink-0"><use href="#logit"/></svg><b>Logistic Regression</b></div>
        <div class="flex h-[14px] items-center justify-center"><a href="#" class="border-b border-[#555] leading-[9px]">Use Automatic Chart</a></div>
        <div class="flex h-7 items-center">Data source: &nbsp;HEARTCT</div>

        <div class="mr-[10px] flex h-4 items-center justify-between"><span>Response</span><a href="#" class="mt-[2px] border-b border-[#555] leading-[9px]">Advanced</a></div>
        <div class="flex text-[#15436b]"><div class="flex h-4 w-[121px] items-center gap-[2px] border border-[#7c8790] bg-white pl-[2px] text-[#333]"><svg class="size-[9px]"><use href="#cat"/></svg>Status</div><button class="ml-[3px] flex h-[14px] items-center" aria-label="Response menu"><svg class="h-[5px] w-[6px]"><use href="#caret"/></svg></button></div>

        <div class="mt-[6px] border-t border-[#c9c9c9]"></div>
        <div class="flex h-5 items-center pt-1">Continuous Effects</div>
        <div class="flex text-[#15436b]">
          <ul class="h-[100px] w-[121px] border border-[#7c8790] bg-white pl-[2px] text-[#333] [&_li]:flex [&_li]:h-[14px] [&_li]:items-center [&_li]:gap-[2px] [&_svg]:size-[9px]">
            <li><svg><use href="#mea"/></svg>Cholesterol</li><li><svg><use href="#mea"/></svg>Diastolic</li><li><svg><use href="#mea"/></svg>Height</li><li><svg><use href="#mea"/></svg>Systolic</li><li><svg><use href="#mea"/></svg>Weight</li><li><svg><use href="#mea"/></svg>Age at Start</li>
          </ul><button class="ml-[3px] flex h-[14px] items-center" aria-label="Continuous Effects menu"><svg class="h-[5px] w-[6px]"><use href="#caret"/></svg></button>
        </div>
        <div class="flex h-[17px] items-center">Classification Effects</div>
        <div class="flex text-[#15436b]"><div class="flex h-[29px] w-[121px] items-start gap-[2px] border border-[#7c8790] bg-white pt-px pl-[2px] text-[#333]"><svg class="mt-[2px] size-[9px]"><use href="#cat"/></svg>Sex</div><button class="ml-[3px] flex h-[14px] items-center" aria-label="Classification Effects menu"><svg class="h-[5px] w-[6px]"><use href="#caret"/></svg></button></div>
        <div class="mr-[10px] flex h-[17px] items-center justify-between"><label for="inter">Interaction Effects</label><a href="#" class="mt-[2px] border-b border-[#555] leading-[9px]">Create</a></div>
        <div class="flex text-[#15436b]"><div class="flex h-[15px] w-[121px] items-center border border-[#7c8790] bg-white pl-[2px]"><svg class="size-[9px] shrink-0 opacity-50" viewBox="0 0 12 12"><path fill="#15436b" d="M0 1h3v3H0zM3 5h3v3H3zM5 1h2v2H5zM9 4h2v2H9zM8 8h3v3H8zM1 9h2v1H1z"/></svg><input id="inter" class="ml-[2px] w-full min-w-0 bg-transparent outline-none placeholder:text-[#c4c4c4]" placeholder="Interaction"></div><button class="ml-[3px] flex h-[14px] items-center text-[#c4c4c4]" aria-label="Interaction menu" disabled><svg class="h-[5px] w-[6px]"><use href="#caret"/></svg></button></div>

        <div class="mt-[6px] border-t border-[#c9c9c9]"></div>
        <div class="mr-[10px] flex h-[21px] items-center justify-between"><span class="mt-1">Group By</span><a href="#" class="mb-[2px] border-b border-[#555] leading-[9px]">Advanced</a></div>
        <div class="flex text-[#15436b]"><div class="flex h-[30px] w-[121px] items-start gap-[2px] border border-[#7c8790] bg-white pt-px pl-[2px] text-[#333]"><svg class="mt-[2px] size-[9px]"><use href="#cat"/></svg>Cholesterol Status</div><button class="ml-[3px] flex h-[14px] items-center" aria-label="Group By menu"><svg class="h-[5px] w-[6px]"><use href="#caret"/></svg></button></div>
        <div class="mt-[6px] border-t border-[#c9c9c9]"></div>

        <label for="freqrole" class="flex h-[21px] items-center pt-1">Frequency</label>
        <div class="flex text-[#15436b]"><div class="flex h-4 w-[121px] items-center border border-[#7c8790] bg-white pl-[2px]"><svg class="size-[9px] shrink-0 opacity-50"><use href="#mea"/></svg><input id="freqrole" class="ml-[2px] w-full min-w-0 bg-transparent outline-none placeholder:text-[#c4c4c4]" placeholder="Measure"></div><button class="ml-[3px] flex h-[14px] items-center" aria-label="Frequency menu"><svg class="h-[5px] w-[6px]"><use href="#caret"/></svg></button></div>
        <label for="offset" class="flex h-[21px] items-center pt-1">Offset</label>
        <div class="flex text-[#15436b]"><div class="flex h-4 w-[121px] items-center border border-[#7c8790] bg-white pl-[2px]"><svg class="size-[9px] shrink-0 opacity-50"><use href="#mea"/></svg><input id="offset" class="ml-[2px] w-full min-w-0 bg-transparent outline-none placeholder:text-[#c4c4c4]" placeholder="Measure"></div><button class="ml-[3px] flex h-[14px] items-center" aria-label="Offset menu"><svg class="h-[5px] w-[6px]"><use href="#caret"/></svg></button></div>
        <label for="weight" class="flex h-4 items-center">Weight</label>
        <div class="flex text-[#15436b]"><div class="flex h-4 w-[121px] items-center border border-[#7c8790] bg-white pl-[2px]"><svg class="size-[9px] shrink-0 opacity-50"><use href="#mea"/></svg><input id="weight" class="ml-[2px] w-full min-w-0 bg-transparent outline-none placeholder:text-[#c4c4c4]" placeholder="Measure"></div><button class="ml-[3px] flex h-[14px] items-center" aria-label="Weight menu"><svg class="h-[5px] w-[6px]"><use href="#caret"/></svg></button></div>
      </div>
      <div class="flex h-8 shrink-0 items-center bg-white pr-[3px] pl-[3px]">
        <label class="flex items-center gap-1"><span class="relative flex size-2"><input type="checkbox" checked class="size-2 appearance-none border border-[#6d7d8b] bg-white"><svg class="pointer-events-none absolute inset-0 size-2" viewBox="0 0 8 8"><path fill="none" stroke="#15436b" stroke-width="1.600" d="m1.500 4 2 2.500 3-5.500"/></svg></span>Auto-update</label>
        <button class="ml-auto h-[17px] w-[31px] border border-[#cfcfcf] bg-linear-to-b from-white to-[#ececec] text-[#777]">Update</button>
      </div>
      <div class="mb-px flex h-[17px] shrink-0 items-center justify-center bg-[#8fadb0]" role="progressbar" aria-valuenow="100" aria-label="Progress">100%</div>
    </aside>
  </div>
</div>

<!-- Monitor controls and base -->
<div class="flex h-[30px] shrink-0 items-center justify-end gap-[9px] pr-[30px] [&>button]:h-[18px] [&>button]:rounded-full [&>button]:border-2 [&>button]:border-[#222]">
  <button class="w-[18px]" aria-label="Input"></button>
  <i class="mx-[5px] size-2 rounded-full border border-[#2f8fe8] bg-[#7fc3f7]"></i>
  <button class="w-[18px]" aria-label="Minus"></button>
  <button class="w-[18px]" aria-label="Plus"></button>
  <button class="w-9" aria-label="Menu"></button>
  <button class="w-9" aria-label="Power"></button>
</div>
<div class="flex h-[3px] shrink-0 justify-center bg-black"><i class="w-[55px] bg-[#c3c9cc]"></i></div>
</body>
</html>
